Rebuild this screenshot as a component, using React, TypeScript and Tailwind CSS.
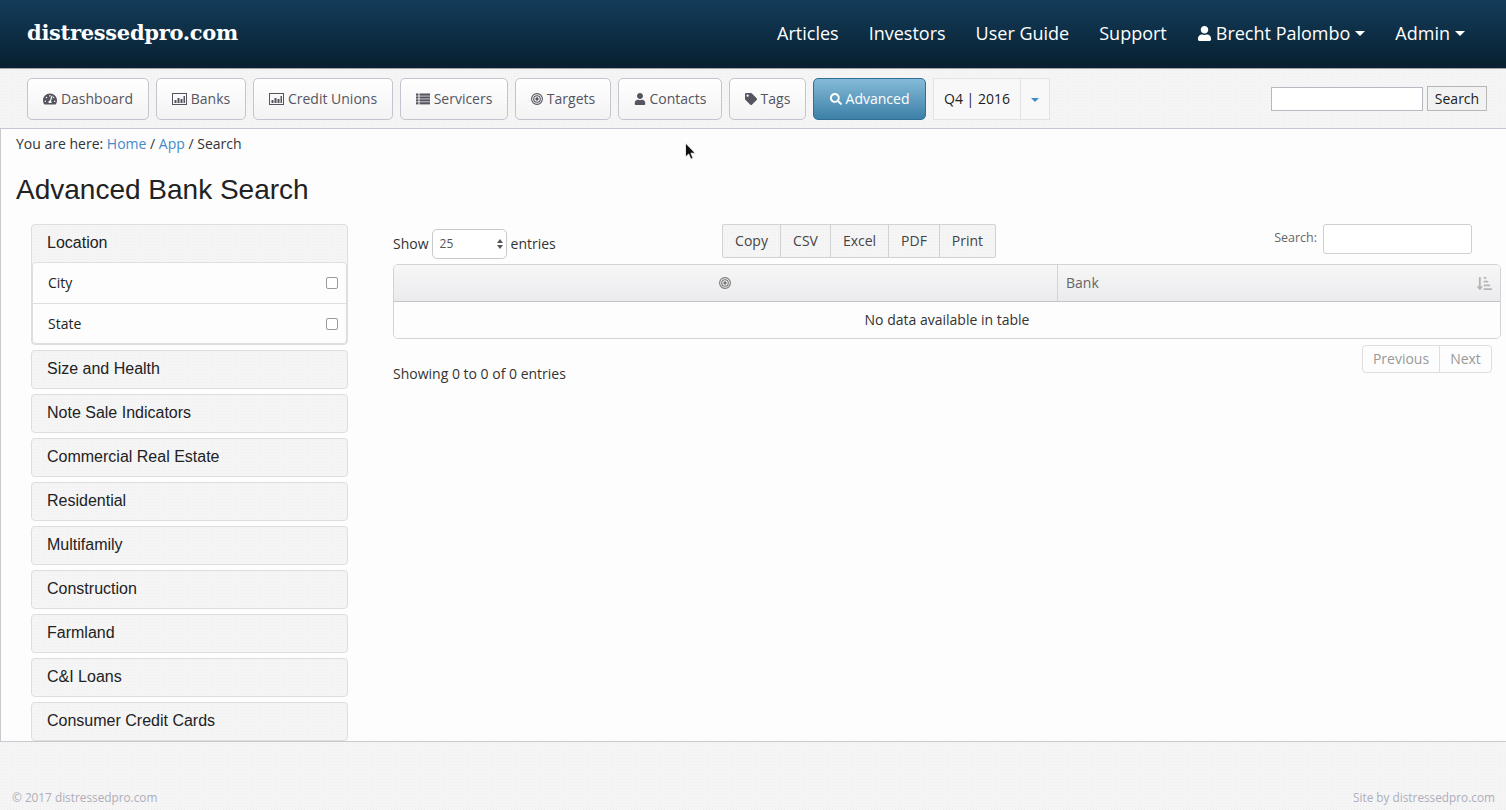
import { FaSearch, FaSortAmountDownAlt, FaTachometerAlt, FaTag, FaUser } from "react-icons/fa";
import type { ReactNode } from "react";

const paper = "bg-[#f5f5f6] bg-[radial-gradient(#eeeef0_1px,transparent_1px)] bg-[length:3px_3px]";

function BarChartIcon() {
  return (
    <svg width="15" height="12" viewBox="0 0 15 12" fill="currentColor">
      <path d="M0 0h15v12H0zM1 1v10h13V1z" fillRule="evenodd" />
      <rect x="2.5" y="7" width="2" height="3" />
      <rect x="5.5" y="5" width="2" height="5" />
      <rect x="8.5" y="6" width="2" height="4" />
      <rect x="11.5" y="3" width="1.5" height="7" />
    </svg>
  );
}

function ListIcon() {
  return (
    <svg width="14" height="12" viewBox="0 0 14 12" fill="currentColor">
      <rect x="0" y="0.5" width="2.5" height="2.2" />
      <rect x="3.5" y="0.5" width="10.5" height="2.2" />
      <rect x="0" y="3.4" width="2.5" height="2.2" />
      <rect x="3.5" y="3.4" width="10.5" height="2.2" />
      <rect x="0" y="6.3" width="2.5" height="2.2" />
      <rect x="3.5" y="6.3" width="10.5" height="2.2" />
      <rect x="0" y="9.2" width="2.5" height="2.2" />
      <rect x="3.5" y="9.2" width="10.5" height="2.2" />
    </svg>
  );
}

function TargetIcon({ size = 12 }: { size?: number }) {
  return (
    <svg width={size} height={size} viewBox="0 0 12 12" fill="none" stroke="currentColor">
      <circle cx="6" cy="6" r="5.4" strokeWidth="1.1" />
      <circle cx="6" cy="6" r="3.3" strokeWidth="1.1" />
      <circle cx="6" cy="6" r="1.4" fill="currentColor" strokeWidth="0.5" />
    </svg>
  );
}

function Caret({ className }: { className: string }) {
  return <span className={`inline-block h-0 w-0 border-x-[5px] border-t-[5px] border-x-transparent ${className}`} />;
}

const tabs: { label: string; icon: ReactNode; width: string }[] = [
  { label: "Dashboard", icon: <FaTachometerAlt size={14} />, width: "w-[122px]" },
  { label: "Banks", icon: <BarChartIcon />, width: "w-[90px]" },
  { label: "Credit Unions", icon: <BarChartIcon />, width: "w-[140px]" },
  { label: "Servicers", icon: <ListIcon />, width: "w-[108px]" },
  { label: "Targets", icon: <TargetIcon />, width: "w-[96px]" },
  { label: "Contacts", icon: <FaUser size={12} />, width: "w-[104px]" },
  { label: "Tags", icon: <FaTag size={12} />, width: "w-[77px]" },
];

const panels = [
  "Size and Health",
  "Note Sale Indicators",
  "Commercial Real Estate",
  "Residential",
  "Multifamily",
  "Construction",
  "Farmland",
  "C&I Loans",
  "Consumer Credit Cards",
];

function Header() {
  return (
    <header className="flex h-[69px] items-center justify-between border-b border-[#9fa3a8] bg-gradient-to-b from-[#133c5b] to-[#08202f] pb-[2px] pl-[27px] pr-[41px]">
      <a className="font-['DejaVu_Serif',serif] text-[21px] font-bold tracking-[-0.3px] text-white">distressedpro.com</a>
      <nav className="flex items-center gap-[30px] text-[18px] font-medium text-white">
        <a>Articles</a>
        <a>Investors</a>
        <a>User Guide</a>
        <a>Support</a>
        <a className="flex items-center gap-[4px]">
          <FaUser size={15} />
          Brecht Palombo
          <Caret className="ml-[1px] border-t-white" />
        </a>
        <a className="flex items-center gap-[5px]">
          Admin
          <Caret className="border-t-white" />
        </a>
      </nav>
    </header>
  );
}

function Toolbar() {
  return (
    <div className={`flex h-[60px] items-center border-b border-[#c6c6d0] pl-[27px] pr-[19px] ${paper}`}>
      <div className="flex items-center gap-[7px]">
        {tabs.map((tab) => (
          <a
            key={tab.label}
            className={`flex h-[42px] items-center justify-center gap-[4px] rounded-[5px] border border-[#c4c4ce] bg-gradient-to-b from-white to-[#f3f3f3] text-[14px] text-[#55555f] ${tab.width}`}
          >
            {tab.icon}
            {tab.label}
          </a>
        ))}
        <a className="flex h-[42px] w-[113px] items-center justify-center gap-[4px] rounded-[5px] border border-[#2f6f96] bg-gradient-to-b from-[#85bbd8] to-[#3b80a8] text-[14px] text-white">
          <FaSearch size={12} />
          Advanced
        </a>
        <div className="flex h-[42px] border border-[#e3e3e6] bg-[#f8f8f8] text-[14px] text-[#1c1c1c]">
          <span className="flex w-[86px] items-center justify-center">Q4 | 2016</span>
          <span className="flex w-[29px] items-center justify-center border-l border-[#e3e3e6]">
            <span className="inline-block h-0 w-0 translate-y-[1px] border-x-[4px] border-t-[4px] border-x-transparent border-t-[#3c8dc5]" />
          </span>
        </div>
      </div>
      <div className="ml-auto flex items-center gap-[4px]">
        <input className="h-[24px] w-[152px] border border-[#b8b8c0] bg-white" />
        <button className="h-[25px] w-[60px] border border-[#b8b8b8] bg-[#f2f2f2] text-[14px] text-[#1c1c1c]">Search</button>
      </div>
    </div>
  );
}

function Sidebar() {
  return (
    <aside className="ml-[30px] flex w-[317px] shrink-0 flex-col gap-[5px] font-['Liberation_Sans',sans-serif] text-[16px] text-[#222]">
      <div className={`rounded-[4px] border border-[#dedede] ${paper}`}>
        <div className="flex h-[37px] items-center pb-[2px] pl-[15px]">Location</div>
        <div className="rounded-[4px] border border-[#dedede] bg-[#fdfdfd] font-['Open_Sans',sans-serif] text-[14px]">
          <label className="flex h-[41px] items-center justify-between border-b border-[#dedede] pl-[15px] pr-[8px]">
            <span className="pb-[2px]">City</span>
            <span className="h-[12px] w-[12px] rounded-[2px] border border-[#9a9a9a] bg-white" />
          </label>
          <label className="flex h-[39px] items-center justify-between pl-[15px] pr-[8px]">
            <span className="pb-[1px]">State</span>
            <span className="h-[12px] w-[12px] rounded-[2px] border border-[#9a9a9a] bg-white" />
          </label>
        </div>
      </div>
      {panels.map((name) => (
        <div key={name} className={`flex h-[39px] shrink-0 items-center rounded-[4px] border border-[#dedede] pb-[2px] pl-[15px] ${paper}`}>
          {name}
        </div>
      ))}
    </aside>
  );
}

function Results() {
  return (
    <section className="ml-[45px] flex w-[1108px] shrink-0 flex-col">
      <div className="flex h-[40px] items-start text-[14px] text-[#333]">
        <div className="flex w-[329px] items-center gap-[4px] pt-[5px]">
          <span className="-mr-[1px] pb-[2px]">Show</span>
          <span className="flex h-[30px] w-[75px] items-center justify-between rounded-[5px] border border-[#c9c9c9] bg-white pl-[7px] pr-[3px] text-[12px] text-[#555]">
            25
            <span className="flex flex-col gap-[2px]">
              <span className="h-0 w-0 border-x-[3px] border-b-[4px] border-x-transparent border-b-[#555]" />
              <span className="h-0 w-0 border-x-[3px] border-t-[4px] border-x-transparent border-t-[#555]" />
            </span>
          </span>
          <span className="pb-[2px]">entries</span>
        </div>
        <div className={`flex h-[34px] rounded-[2px] border border-[#d2d2d2] text-[#444] ${paper}`}>
          <span className="flex w-[58px] items-center justify-center border-r border-[#d2d2d2] pb-[2px]">Copy</span>
          <span className="flex w-[50px] items-center justify-center border-r border-[#d2d2d2] pb-[2px]">CSV</span>
          <span className="flex w-[58px] items-center justify-center border-r border-[#d2d2d2] pb-[2px]">Excel</span>
          <span className="flex w-[51px] items-center justify-center border-r border-[#d2d2d2] pb-[2px]">PDF</span>
          <span className="flex w-[55px] items-center justify-center pb-[2px]">Print</span>
        </div>
        <div className="ml-auto mr-[29px] flex items-start gap-[6px] text-[12.5px] text-[#666]">
          <span className="pt-[5px]">Search:</span>
          <input className="h-[30px] w-[149px] rounded-[3px] border border-[#cfcfcf] bg-white" />
        </div>
      </div>
      <div className="overflow-hidden rounded-[5px] border border-[#d2d2d8] text-[14px]">
        <div className="flex h-[37px] border-b border-[#c4c4ce] bg-gradient-to-b from-[#f7f7f7] to-[#ebebee] text-[#666]">
          <div className="flex w-[664px] items-center justify-center border-r border-[#d2d2d8] pr-[2px] text-[#777]">
            <TargetIcon />
          </div>
          <div className="flex flex-1 items-center justify-between pb-[2px] pl-[8px] pr-[8px]">
            Bank
            <FaSortAmountDownAlt size={15} className="translate-y-[1px] text-[#b5b5b5]" />
          </div>
        </div>
        <div className="flex h-[36px] items-center justify-center bg-[#fdfdfd] pb-[2px] text-[#333]">No data available in table</div>
      </div>
      <div className="mt-[6px] flex items-start justify-between pr-[9px] text-[14px]">
        <span className="pt-[18px] text-[#333]">Showing 0 to 0 of 0 entries</span>
        <div className="flex h-[28px] rounded-[4px] border border-[#dedede] text-[#999]">
          <span className="flex w-[77px] items-center justify-center border-r border-[#dedede] pb-[2px]">Previous</span>
          <span className="flex w-[51px] items-center justify-center pb-[2px]">Next</span>
        </div>
      </div>
    </section>
  );
}

function Cursor() {
  return (
    <svg className="absolute left-[684px] top-[142px]" width="13" height="20" viewBox="0 0 13 20">
      <path d="M1.5 1v14l3.2-3 2.2 5.2 2.2-1-2.2-5h4.4z" fill="#111" stroke="#fff" strokeWidth="0.8" />
    </svg>
  );
}

export default function App() {
  return (
    <div className="relative flex h-[810px] flex-col overflow-hidden bg-[#f5f5f5] font-['Open_Sans',sans-serif]">
      <Header />
      <Toolbar />
      <main className="h-[613px] overflow-hidden border-b border-l border-[#c9c9d0] bg-[#fdfdfd]">
        <p className="pl-[15px] pt-[5px] text-[14px] leading-[20px] text-[#333]">
          You are here: <a className="text-[#428bca]">Home</a> / <a className="text-[#428bca]">App</a> / Search
        </p>
        <h1 className="mb-[18px] mt-[20px] pl-[15px] font-['Liberation_Sans',sans-serif] text-[28px] leading-[32px] text-[#222]">
          Advanced Bank Search
        </h1>
        <div className="flex">
          <Sidebar />
          <Results />
        </div>
      </main>
      <footer className={`flex flex-1 items-end justify-between pb-[3px] pl-[12px] pr-[11px] text-[11.8px] text-[#aeaeb9] ${paper}`}>
        <span>© 2017 distressedpro.com</span>
        <span>Site by distressedpro.com</span>
      </footer>
      <Cursor />
    </div>
  );
}
